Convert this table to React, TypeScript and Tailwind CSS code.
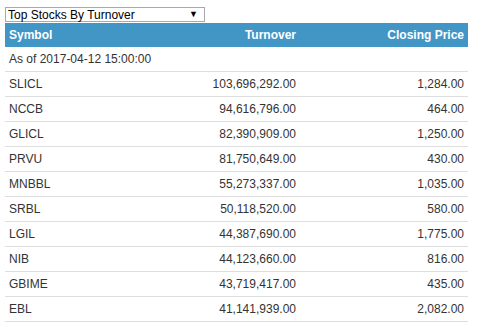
const rows = [
  ['SLICL', '103,696,292.00', '1,284.00'],
  ['NCCB', '94,616,796.00', '464.00'],
  ['GLICL', '82,390,909.00', '1,250.00'],
  ['PRVU', '81,750,649.00', '430.00'],
  ['MNBBL', '55,273,337.00', '1,035.00'],
  ['SRBL', '50,118,520.00', '580.00'],
  ['LGIL', '44,387,690.00', '1,775.00'],
  ['NIB', '44,123,660.00', '816.00'],
  ['GBIME', '43,719,417.00', '435.00'],
  ['EBL', '41,141,939.00', '2,082.00'],
]

export default function App() {
  return (
    <div className="w-[478px] h-[324px] bg-white pl-[5px] pt-[7px] font-['Liberation_Sans',Arial,sans-serif] text-[12px] text-[#333]">
      <div className="w-[200px] h-[15px] border border-[#a9a9a9] flex items-center justify-between pl-[2px] pr-[6px] text-[12px] text-black leading-none">
        <span>Top Stocks By Turnover</span>
        <span className="text-[9px]">▼</span>
      </div>
      <div className="w-[463px] mt-px">
        <div className="grid grid-cols-[145px_150px_1fr] h-[24px] items-center bg-[#4196c6] text-white font-bold">
          <div className="px-1">Symbol</div>
          <div className="px-1 text-right">Turnover</div>
          <div className="px-1 text-right">Closing Price</div>
        </div>
        <div className="h-[25px] flex items-center px-1 border-b border-[#dedede]">As of 2017-04-12 15:00:00</div>
        {rows.map(([sym, turnover, price]) => (
          <div key={sym} className="grid grid-cols-[145px_150px_1fr] h-[25px] items-center border-b border-[#dedede]">
            <div className="px-1">{sym}</div>
            <div className="px-1 text-right">{turnover}</div>
            <div className="px-1 text-right">{price}</div>
          </div>
        ))}
      </div>
    </div>
  )
}
